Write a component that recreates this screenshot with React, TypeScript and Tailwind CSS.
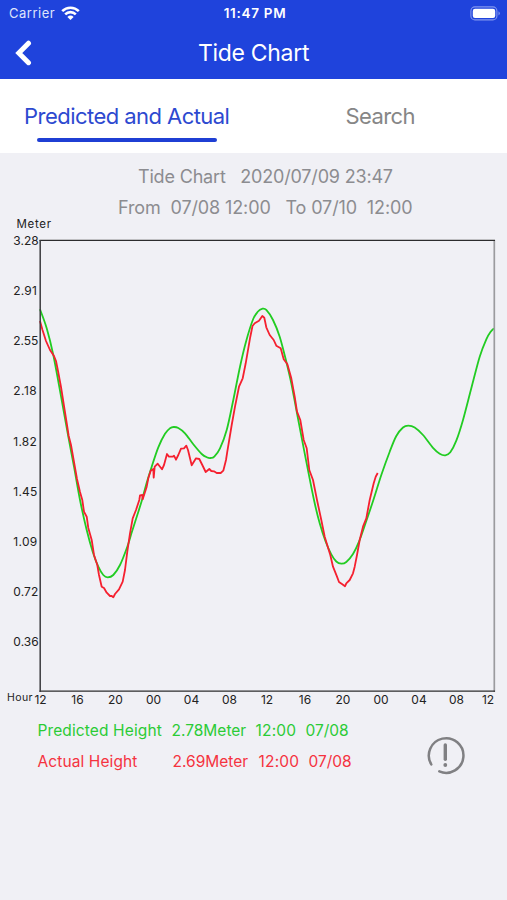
const predicted =
  "40,309.3 46.7,328.3 53.3,355 61.7,400 68.3,436.7 74,466.7 80,500 86.7,530 92.7,551.7 98.3,566.7 103.3,575 107.7,577.3 113.3,575 120,565 127.3,546.7 131.7,532.5 137.3,515 142.3,499 146.7,482.7 151.7,466.7 158.3,447.3 165,433.8 170,428.3 173.7,427 178.3,428 185,433.3 193.3,444.3 201.7,454 207.3,457.5 210.7,458 214.3,456.7 220,448.3 226.7,430 233.3,400 240,366.7 246,341.7 253,319.5 258,311.5 262,308.8 266.3,309.8 273,320 279.7,336.7 286.3,361.7 291.3,383.3 297,413.3 304.7,453.3 314,500 319.7,523.3 325.7,541.7 331.3,554.3 336.3,561.5 341.3,563.7 346.3,562 353,554 359,541.7 366.3,521 373.7,499 381.3,475 389.7,451.7 396.3,436 403,427.5 408.3,425.7 414.7,427.5 423,435 433,447.8 439.7,453.7 445.3,455.3 450.3,452.3 456.3,440.7 463,420 471.3,388.3 479.7,356.7 486.3,339.3 490.7,331.8 494,328.3";

const actual =
  "40,321 42.5,330 46,341 50,350 54,356 56,361 58,371 61,387 64,406 67,425 68.7,436 71,445 74,462 77,479 80,492 82.3,500 84,511.7 86.7,516.7 88.3,528 91.7,540 94,555 97.3,565 99,575 101.7,586.7 104,588 106.7,592.7 110,596 111.7,596 113.3,597.3 115,594 119,589.3 122.7,581.7 125,570 127.3,551.7 130,533.3 132.7,518.3 136,510 139.3,500 140,495.3 142.3,495 142.7,499.3 146.7,486.7 148.3,478.3 150.7,470.7 153.3,469 153.7,477.7 154.7,466.7 157.7,463.7 162,469.3 164,465 167,454 169,456.7 172.7,456.7 174,455.7 176,459.7 178.3,455 181,448.7 184,448.3 186.3,445.7 188,450 191.7,465.3 196,458.3 199.3,459 202.3,465 205.7,472 209.3,469 211.3,471 214,471.3 216.7,473 220.7,473 223.3,470.7 226,460 227.3,451.7 231.7,425 235,406.7 239,386.7 242.7,378.3 245.7,363.3 250,338.3 252.5,326 254.7,323.3 259,320.7 262.3,316 264.3,317.7 266.3,327.3 269.7,335 273.7,340 276.3,345.7 280.7,348.3 283.7,359.3 287.3,364 291.3,378.3 294.7,396.7 297,411.7 300.3,420 303.7,440 306.7,448.3 309.3,470 313,480 317,500 321.3,520 324.7,536.7 330.3,555 333,566.7 337,576.7 339,582 342.3,584.3 345,586.3 346.3,583.3 349.7,580 353,573.3 354.7,566.7 357,555 359.7,540 363,526.7 366.3,518.3 369.7,500 373.7,483.3 375.7,476.7 377.7,473";

const heights = ["3.28", "2.91", "2.55", "2.18", "1.82", "1.45", "1.09", "0.72", "0.36"];
const heightWidths = [25.5, 23.5, 25, 23.5, 23.5, 24, 24, 25, 25.5];

const hours = [
  { label: "12", x: 40.5 },
  { label: "16", x: 77.5 },
  { label: "20", x: 115.5 },
  { label: "00", x: 153.5 },
  { label: "04", x: 191.5 },
  { label: "08", x: 229.5 },
  { label: "12", x: 267 },
  { label: "16", x: 305 },
  { label: "20", x: 343 },
  { label: "00", x: 381 },
  { label: "04", x: 419 },
  { label: "08", x: 456.5 },
  { label: "12", x: 488 },
];

// Catmull-Rom spline through the points, as cubic beziers
function smoothPath(points: string) {
  const p = points.split(" ").map((s) => s.split(",").map(Number));
  let d = `M${p[0][0]} ${p[0][1]}`;
  for (let i = 0; i < p.length - 1; i++) {
    const a = p[i - 1] ?? p[i];
    const b = p[i];
    const c = p[i + 1];
    const e = p[i + 2] ?? c;
    d += `C${b[0] + (c[0] - a[0]) / 6} ${b[1] + (c[1] - a[1]) / 6} ${c[0] - (e[0] - b[0]) / 6} ${c[1] - (e[1] - b[1]) / 6} ${c[0]} ${c[1]}`;
  }
  return d;
}

function StatusBar() {
  return (
    <div className="grid h-[27px] grid-cols-3 items-center pl-[9px] pr-[6px] text-[13px] leading-none">
      <div className="flex items-center gap-[6px]">
        <span className="tracking-[0.5px] text-[#dfe5fb]">Carrier</span>
        <svg width="19" height="15" viewBox="0 0 19 15" fill="none" stroke="#fff" strokeWidth="2.6">
          <path d="M1.2 5.2a11.8 11.8 0 0 1 16.6 0" />
          <path d="M4.2 8.3a7.5 7.5 0 0 1 10.6 0" />
          <path d="M9.5 14L6.4 10.9a4.4 4.4 0 0 1 6.2 0z" fill="#fff" stroke="none" />
        </svg>
      </div>
      <span className="whitespace-nowrap text-center text-[13.5px] font-semibold tracking-[0.7px]">11:47 PM</span>
      <svg className="justify-self-end" width="31" height="15" viewBox="0 0 31 15">
        <rect x="0.9" y="0.9" width="26" height="13" rx="4" fill="none" stroke="#8397ee" strokeWidth="1.1" />
        <rect x="2.8" y="2.8" width="22.4" height="9.2" rx="2.2" fill="#fff" />
        <path d="M28.5 5.2q2.6 2.2 0 4.4z" fill="#8397ee" />
      </svg>
    </div>
  );
}

function TideChart() {
  return (
    <svg className="block" width="507" height="495" viewBox="0 215 507 495" fill="#222">
      <text x="16.5" y="227.5" fontSize="11.5" textLength="34.5">Meter</text>
      {heights.map((h, i) => (
        <text key={h} x="13.3" y={245 + i * 50.15} fontSize="12" textLength={heightWidths[i]}>
          {h}
        </text>
      ))}
      <text x="7" y="701" fontSize="10.5" textLength="25.5">Hour</text>
      {hours.map(({ label, x }) => (
        <text key={x} x={x} y="703.6" fontSize="12" textAnchor="middle">
          {label}
        </text>
      ))}
      <g fill="none" strokeWidth="1.8" strokeLinejoin="round">
        <path d={smoothPath(predicted)} stroke="#22cc22" />
        <polyline points={actual} stroke="#f5202f" />
      </g>
      <path d="M494.3 240V692" stroke="#9b9b9e" strokeWidth="1.7" />
      <path d="M39.5 240.3H495M39.5 691.2H495" stroke="#2c2c2e" strokeWidth="1.3" />
      <path d="M40.2 240V692" stroke="#3c3c3f" strokeWidth="1.5" />
    </svg>
  );
}

export default function App() {
  return (
    <div className="h-[900px] w-[507px] overflow-hidden bg-[#f0f0f5] font-['Inter',sans-serif]">
      <header className="h-[79px] bg-[#1f43dc] text-white">
        <StatusBar />
        <div className="grid h-[52px] grid-cols-3 items-center">
          <svg className="ml-[15px]" width="18" height="26" viewBox="0 0 18 26" fill="none">
            <path d="M13.5 3.2L3.8 13l9.7 9.7" stroke="#fff" strokeWidth="5" strokeLinecap="round" />
          </svg>
          <h1 className="whitespace-nowrap text-center text-[23px] leading-none tracking-[-0.3px]">Tide Chart</h1>
        </div>
      </header>

      <nav className="grid h-[74px] grid-cols-2 bg-white pt-[23px] text-[22px] leading-7">
        <div className="flex flex-col items-center whitespace-nowrap text-[#2d49d0]">
          <span className="tracking-[-0.55px]">Predicted and Actual</span>
          <span className="mt-2 h-[4px] w-[180px] rounded-full bg-[#1f3fd4]" />
        </div>
        <span className="text-center tracking-[-0.6px] text-[#868686]">Search</span>
      </nav>

      <section className="flex h-[62px] flex-col whitespace-pre pt-[9px] text-[18px] leading-[30.5px] text-[#8c8c90]">
        <p className="ml-[138px] tracking-[-0.18px]">Tide Chart   2020/07/09 23:47</p>
        <p className="ml-[118px] tracking-[-0.12px]">From  07/08 12:00   To 07/10  12:00</p>
      </section>

      <TideChart />

      <footer className="flex justify-between pl-[37.5px] pr-[42px] pt-[6px] text-[15.5px] leading-[30.5px]">
        <div className="whitespace-pre">
          <div className="flex text-[#2bcb35]">
            <span className="w-[134px] tracking-[0.12px]">Predicted Height</span>
            <span className="w-[84px]">2.78Meter</span>
            <span className="w-[50px] tracking-[0.2px]">12:00</span>
            <span>07/08</span>
          </div>
          <div className="flex text-[#f5333f]">
            <span className="w-[135px] tracking-[0.1px]">Actual Height</span>
            <span className="w-[86px]">2.69Meter</span>
            <span className="w-[50px] tracking-[0.2px]">12:00</span>
            <span>07/08</span>
          </div>
        </div>
        <svg className="mt-[18.5px]" width="40" height="40" viewBox="0 0 40 40" fill="none" stroke="#808083">
          <path d="M6.3 29.4A17.3 17.3 0 1 1 14.3 36.4" strokeWidth="2.5" strokeLinecap="round" />
          <path d="M20.3 10V24.3" strokeWidth="3.4" strokeLinecap="round" />
          <circle cx="20.3" cy="30" r="1.9" fill="#808083" stroke="none" />
        </svg>
      </footer>
    </div>
  );
}
